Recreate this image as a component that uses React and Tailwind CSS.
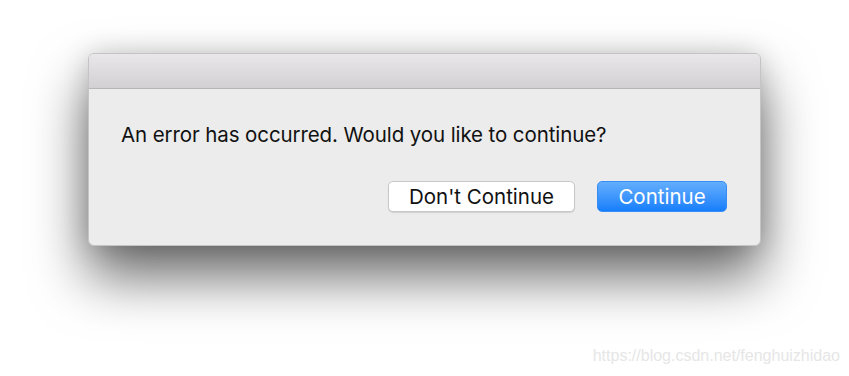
import React from 'react';

const App = () => {
  return (
    <div
      className="relative w-[849px] h-[376px] overflow-hidden bg-white pt-[53px] pl-[88px]"
      style={{ fontFamily: 'Inter, "Helvetica Neue", Arial, sans-serif' }}
    >
      {/* dialog window */}
      <div className="w-[673px] h-[193px] rounded-[6px] border border-[#c4c4c4] bg-[#ececec] overflow-hidden shadow-[0_30px_55px_rgba(0,0,0,0.6),0_0_26px_rgba(0,0,0,0.15)] flex flex-col">
        <div className="h-[35px] shrink-0 bg-gradient-to-b from-[#e9e7e9] to-[#d2d0d2] border-b border-[#b7b5b7]" />
        <div className="flex-1 flex flex-col pl-[32px] pr-[33px]">
          <p className="mt-[34px] text-[20.5px] leading-[24px] text-[#111] tracking-[-0.1px]">
            An error has occurred. Would you like to continue?
          </p>
          <div className="mt-[34px] flex justify-end gap-[22px]">
            <button className="w-[187px] h-[31px] pt-[1px] rounded-[5px] bg-white border border-[#c8c8c8] shadow-[0_1px_1px_rgba(0,0,0,0.12)] text-[20.5px] text-[#111] leading-none">
              Don't Continue
            </button>
            <button className="w-[130px] h-[31px] pt-[1px] rounded-[5px] bg-gradient-to-b from-[#62aefd] to-[#137efb] border border-[#3a8cf5] text-[20.5px] text-white leading-none">
              Continue
            </button>
          </div>
        </div>
      </div>

      <div className="absolute right-[9px] bottom-[8px] text-[16px] text-[#e6e6e6]" style={{ fontFamily: 'Arial, "Liberation Sans", sans-serif' }}>
        https://blog.csdn.net/fenghuizhidao
      </div>
    </div>
  );
};

export default App;
